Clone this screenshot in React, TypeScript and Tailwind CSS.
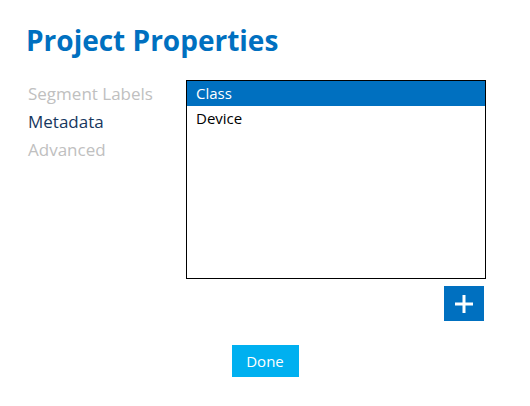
export default function App() {
  const items = ['Class', 'Device'];
  const selected = 0;

  return (
    <div className="w-[530px] h-[406px] bg-white font-['Open_Sans',sans-serif]">
      <h1 className="pl-[26px] pt-[22px] text-[28px] leading-[36px] font-bold text-[#0070c0]">
        Project Properties
      </h1>

      <div className="flex mt-[22px]">
        {/* Side nav */}
        <nav className="w-[186px] pl-[28px] flex flex-col text-[17px] leading-[28px]">
          <span className="text-[#c0c0c0]">Segment Labels</span>
          <span className="text-[#17375e]">Metadata</span>
          <span className="text-[#c0c0c0]">Advanced</span>
        </nav>

        <div className="flex flex-col items-end">
          <ul className="w-[300px] h-[199px] border border-black text-[15px]">
            {items.map((item, i) => (
              <li
                key={item}
                className={`h-[25px] px-[9px] leading-[25px] ${i === selected ? 'bg-[#0070c0] text-white' : 'text-black'}`}
              >
                {item}
              </li>
            ))}
          </ul>
          <button className="mt-[7px] mr-[2px] w-[40px] h-[35px] bg-[#0070c0] flex items-center justify-center">
            <svg width="20" height="20" viewBox="0 0 20 20">
              <path d="M10 1v18M1 10h18" stroke="white" strokeWidth="3" />
            </svg>
          </button>
        </div>
      </div>

      <div className="flex justify-center mt-[24px]">
        <button className="w-[67px] h-[32px] bg-[#00b0f0] text-white text-[15px]">
          Done
        </button>
      </div>
    </div>
  );
}
